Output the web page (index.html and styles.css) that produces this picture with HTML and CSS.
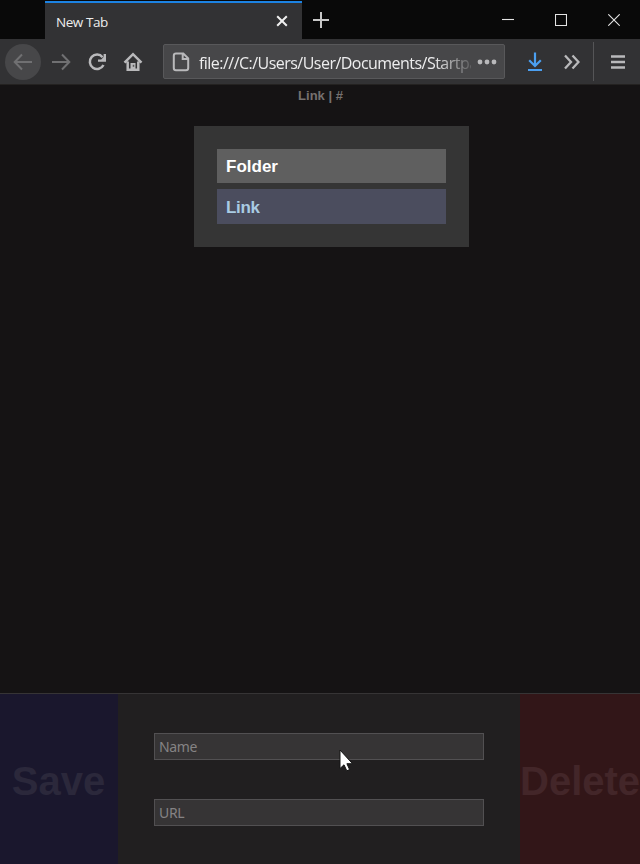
FILE: index.html
```html
<!DOCTYPE html>
<html lang="en">
<head>
<meta charset="utf-8">
<title>New Tab</title>
<link rel="stylesheet" href="styles.css">
</head>
<body>
<header class="titlebar">
  <div class="tab"><span class="tab-title">New Tab</span>
    <svg class="tab-close" width="12" height="12" viewBox="0 0 12 12"><path d="M1.2 1.2l9.6 9.6M10.8 1.2l-9.6 9.6"/></svg>
  </div>
  <svg class="new-tab" width="18" height="18" viewBox="0 0 18 18"><path d="M9 1v16M1 9h16"/></svg>
  <div class="window-controls">
    <svg width="12" height="12" viewBox="0 0 12 12"><path d="M0 5.5h12"/></svg>
    <svg width="12" height="12" viewBox="0 0 12 12"><path d="M.5.5h11v11H.5z"/></svg>
    <svg width="12" height="12" viewBox="0 0 12 12"><path d="M.3.3l11.4 11.4M11.7.3L.3 11.7"/></svg>
  </div>
</header>
<nav class="toolbar">
  <span class="nav-button back"><svg width="20" height="20" viewBox="0 0 20 20"><path d="M19 10H2M9 2.5L1.7 10 9 17.5"/></svg></span>
  <span class="nav-button forward"><svg width="20" height="20" viewBox="0 0 20 20"><path d="M1 10h17M11 2.5l7.3 7.5-7.3 7.5"/></svg></span>
  <span class="nav-button"><svg width="20" height="20" viewBox="0 0 20 20"><path class="heavy" d="M15.6 5.2A7.200 7.200 0 1 0 16.500 13"/><path class="solid" d="M19 2v7.800h-8V7.400h3.200l2.400-2.500V2z"/></svg></span>
  <span class="nav-button"><svg width="20" height="20" viewBox="0 0 20 20"><path class="heavy" d="M1.500 10.600L10 2.200l8.500 8.400M4.700 9.500v8.300h10.600V9.500"/><path class="solid" d="M7.500 18.300v-7.300h5v7.300z"/><path class="door" d="M10.500 12.800v2"/></svg></span>
  <div class="address">
    <svg class="page-icon" width="18" height="20" viewBox="0 0 18 20"><path d="M4 1.500h7.300l4.900 4.900v9.600q0 2.200-2.200 2.200H4q-2.200 0-2.200-2.200V3.700Q1.800 1.500 4 1.500zM10.700 2v5h5"/></svg>
    <span class="url">file:///C:/Users/User/Documents/Startpage</span>
    <svg class="dots" width="20" height="6" viewBox="0 0 20 6"><circle cx="3" cy="3" r="2.400"/><circle cx="10" cy="3" r="2.400"/><circle cx="17" cy="3" r="2.400"/></svg>
  </div>
  <svg class="download" width="16" height="20" viewBox="0 0 16 20"><path d="M8 .5v13M2.200 8.200L8 14l5.800-5.800M1 18h14"/></svg>
  <svg class="overflow" width="16" height="16" viewBox="0 0 16 16"><path d="M1 1.500L7 8l-6 6.500M8.500 1.500l6 6.500-6 6.500"/></svg>
  <span class="separator"></span>
  <svg class="menu" width="14" height="16" viewBox="0 0 14 16"><path d="M0 2.500h14M0 8h14M0 13.500h14"/></svg>
</nav>
<main class="page">
  <div class="path">Link | #</div>
  <section class="folder-card">
    <div class="row folder">Folder</div>
    <div class="row link">Link</div>
  </section>
</main>
<footer class="editor">
  <button class="save">Save</button>
  <div class="fields">
    <input type="text" placeholder="Name">
    <input type="text" placeholder="URL">
  </div>
  <button class="delete">Delete</button>
</footer>
<svg class="cursor" width="14" height="24" viewBox="0 0 14 24"><path d="M1 1v18.500l4-3.700 2.800 6 2.800-1.200-2.700-5.900H13.500z"/></svg>
</body>
</html>
```
FILE: styles.css
```css
* { box-sizing: border-box; }
body {
  margin: 0;
  width: 640px;
  height: 864px;
  overflow: hidden;
  display: flex;
  flex-direction: column;
  background: #151314;
  font-family: "Liberation Sans", Arial, sans-serif;
}
svg { display: block; flex: none; fill: none; stroke: #b9b9bb; stroke-width: 2; }

.titlebar { flex: none; height: 39px; display: flex; align-items: center; background: #090909; }
.tab {
  width: 257px;
  height: 38px;
  margin: 1px 0 0 45px;
  padding: 0 14px 0 11px;
  display: flex;
  align-items: center;
  justify-content: space-between;
  background: #323234;
  border-top: 2px solid #1c83e3;
}
.tab-title { padding-top: 2px; font: 13.5px/20px "Open Sans", sans-serif; letter-spacing: -.45px; color: #ededed; }
.tab-close { stroke: #f0f0f0; }
.new-tab { margin-left: 10px; stroke: #c8c8c8; }
.window-controls { display: flex; gap: 41px; margin: 0 20px 0 auto; }
.window-controls svg { stroke: #e4e4e4; stroke-width: 1.1; }

.toolbar { flex: none; height: 46px; display: flex; align-items: center; background: #323234; border-bottom: 1px solid #242221; padding: 0 15px 0 5px; }
.nav-button { flex: none; width: 36px; height: 36px; display: flex; align-items: center; justify-content: center; border-radius: 50%; }
.nav-button svg { stroke: #b9b9bb; }
.back { background: #474749; margin-right: 2px; }
.back svg, .forward svg { stroke: #707072; }
.nav-button .heavy { stroke-width: 2.5; }
.nav-button .solid { fill: #b9b9bb; stroke: none; }
.nav-button .door { stroke: #59595a; stroke-width: 1.5; }
.address {
  flex: none;
  width: 342px;
  height: 35px;
  margin-left: 12px;
  padding: 0 6px 0 8px;
  display: flex;
  align-items: center;
  background: #474749;
  border: 1px solid #58585a;
  border-radius: 2px;
}
.url {
  width: 272px;
  margin: 2px 6px 0 9px;
  overflow: hidden;
  white-space: nowrap;
  font: 16px/24px "Open Sans", sans-serif;
  letter-spacing: -.53px;
  color: #ededee;
  mask-image: linear-gradient(to right, #000 235px, transparent 278px);
}
.dots { fill: #b9b9bb; stroke: none; }
.download { margin-left: 22px; stroke: #4b9ff0; stroke-width: 2.2; }
.overflow { margin-left: 21px; stroke-width: 2.3; }
.separator { width: 1px; height: 39px; margin-left: 13px; background: #555557; }
.menu { margin-left: auto; stroke-width: 2.3; }

.page { flex: 1; }
.path { padding: 3px 0 0 1px; font-size: 13px; line-height: 16px; font-weight: bold; text-align: center; color: #757170; }
.folder-card {
  width: 275px;
  height: 121px;
  margin: 22px 0 0 194px;
  padding: 23px;
  display: flex;
  flex-direction: column;
  gap: 6px;
  background: #353535;
}
.row { height: 34px; padding-left: 9px; font-size: 17px; line-height: 35px; font-weight: bold; }
.folder { background: #5f5f5f; color: #fff; }
.link { height: 35px; line-height: 37px; letter-spacing: -.3px; background: #4b4d5e; color: #a9cbe3; }

.editor { flex: none; height: 171px; display: flex; background: #211f20; border-top: 1px solid #363435; }
.editor button { flex: none; padding: 3px 0 0; border: 0; font: bold 40px/46px "Liberation Sans", Arial, sans-serif; text-align: center; }
.editor .save { width: 118px; padding-right: 1px; background: #1a172d; color: #2b283b; }
.editor .delete { width: 120px; background: #321618; color: #432629; white-space: nowrap; }
.fields { flex: 1; padding: 39px 36px 38px; display: flex; flex-direction: column; justify-content: space-between; }
.fields input {
  width: 100%;
  height: 27px;
  padding: 0 4px 1px;
  border: 1px solid #525052;
  background: #363435;
  font: 14px "Noto Sans", sans-serif;
  letter-spacing: -.35px;
}
.fields input::placeholder { color: #858384; opacity: 1; }
.cursor { position: absolute; left: 339px; top: 749px; fill: #fff; stroke: #151515; stroke-width: 1; }
```
